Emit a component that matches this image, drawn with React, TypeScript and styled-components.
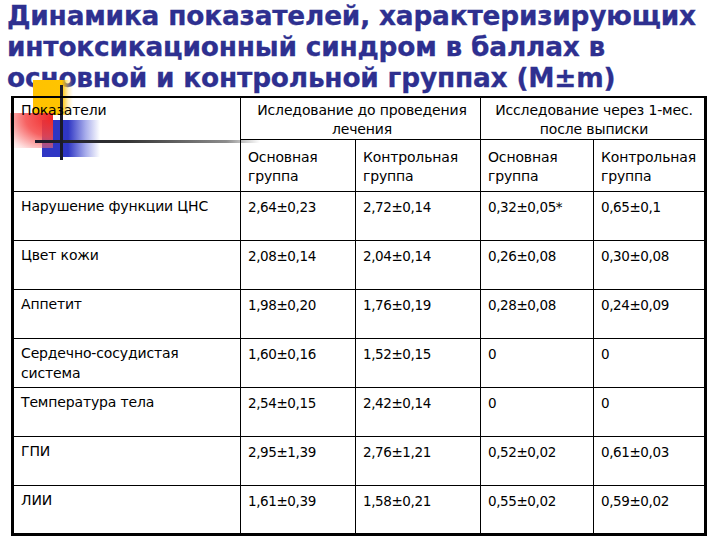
import { createGlobalStyle, styled } from 'styled-components';

const GlobalStyle = createGlobalStyle`
  html, body {
    margin: 0;
    padding: 0;
    background: #ffffff;
  }
  body {
    width: 720px;
    height: 540px;
    overflow: hidden;
    font-family: 'DejaVu Sans', Tahoma, sans-serif;
  }
`;

type Row = {
  label: string;
  values: string[];
};

const rows: Row[] = [
  { label: 'Нарушение функции ЦНС', values: ['2,64±0,23', '2,72±0,14', '0,32±0,05*', '0,65±0,1'] },
  { label: 'Цвет кожи', values: ['2,08±0,14', '2,04±0,14', '0,26±0,08', '0,30±0,08'] },
  { label: 'Аппетит', values: ['1,98±0,20', '1,76±0,19', '0,28±0,08', '0,24±0,09'] },
  { label: 'Сердечно-сосудистая система', values: ['1,60±0,16', '1,52±0,15', '0', '0'] },
  { label: 'Температура тела', values: ['2,54±0,15', '2,42±0,14', '0', '0'] },
  { label: 'ГПИ', values: ['2,95±1,39', '2,76±1,21', '0,52±0,02', '0,61±0,03'] },
  { label: 'ЛИИ', values: ['1,61±0,39', '1,58±0,21', '0,55±0,02', '0,59±0,02'] },
];

const App = () => {
  return (
    <>
      <GlobalStyle />
      <Slide>
        <Title>
          Динамика показателей, характеризирующих интоксикационный синдром в баллах в основной и
          контрольной группах (M±m)
        </Title>
        <TableWrap>
          <Decor aria-hidden>
            <Yellow />
            <Blue />
            <Red />
            <HLine />
            <VLine />
          </Decor>
          <Table>
            <colgroup>
              <col style={{ width: 228 }} />
              <col style={{ width: 115 }} />
              <col style={{ width: 125 }} />
              <col style={{ width: 113 }} />
              <col style={{ width: 112 }} />
            </colgroup>
            <tbody>
              <HeadRow $h={41}>
                <HeadCell rowSpan={2}>Показатели</HeadCell>
                <HeadCell colSpan={2} $center>
                  Иследование до проведения лечения
                </HeadCell>
                <HeadCell colSpan={2} $center>
                  Исследование через 1-мес. после выписки
                </HeadCell>
              </HeadRow>
              <HeadRow $h={52}>
                <GroupCell>Основная группа</GroupCell>
                <GroupCell>Контрольная группа</GroupCell>
                <GroupCell>Основная группа</GroupCell>
                <GroupCell>Контрольная группа</GroupCell>
              </HeadRow>
              {rows.map((r) => (
                <DataRow key={r.label}>
                  <Cell>{r.label}</Cell>
                  {r.values.map((v, i) => (
                    <Value key={i}>{v}</Value>
                  ))}
                </DataRow>
              ))}
            </tbody>
          </Table>
        </TableWrap>
      </Slide>
    </>
  );
};

export default App;

const Slide = styled.div`
  width: 720px;
  height: 540px;
  display: flex;
  flex-direction: column;
`;

const Title = styled.h1`
  margin: 0;
  padding: 0 0 0 7px;
  width: 716px;
  height: 96px;
  font-family: 'DejaVu Sans', Tahoma, sans-serif;
  font-weight: bold;
  font-size: 26.4px;
  line-height: 31px;
  letter-spacing: -0.2px;
  color: #2e3090;
  box-sizing: border-box;
  -webkit-text-stroke: 0.3px #2e3090;
`;

const TableWrap = styled.div`
  position: relative;
  margin-left: 11px;
  width: 696px;
`;

const Table = styled.table`
  position: relative;
  z-index: 1;
  border-collapse: collapse;
  table-layout: fixed;
  width: 694px;
  background: transparent;
  border-top: 2px solid #000;
  border-left: 3px solid #000;
  border-right: 3px solid #000;
  border-bottom: 3px solid #000;
`;

const HeadRow = styled.tr<{ $h: number }>`
  height: ${(p) => p.$h}px;
`;

const DataRow = styled.tr`
  height: 49px;
`;

const Cell = styled.td<{ $center?: boolean }>`
  border: 1px solid #000;
  vertical-align: top;
  padding: 4px 4px 0 7px;
  font-family: 'DejaVu Sans', Tahoma, sans-serif;
  font-size: 14px;
  line-height: 20px;
  letter-spacing: -0.15px;
  color: #000;
  text-align: ${(p) => (p.$center ? 'center' : 'left')};
  overflow: hidden;
`;

const HeadCell = styled(Cell)`
  padding-top: 3px;
  line-height: 19px;
`;

const GroupCell = styled(Cell)`
  padding-top: 8px;
  line-height: 19px;
`;

const Value = styled(Cell)`
  padding-top: 5px;
  font-size: 13.5px;
  letter-spacing: -0.4px;
`;

const Decor = styled.div`
  position: absolute;
  left: -11px;
  top: -16px;
  width: 260px;
  height: 90px;
  pointer-events: none;
  z-index: 0;
`;

const Yellow = styled.div`
  position: absolute;
  left: 33px;
  top: 0;
  width: 40px;
  height: 35px;
  background: linear-gradient(90deg, #ffc200 0%, #ffc400 72%, rgba(255, 215, 100, 0.4) 88%, rgba(255, 235, 170, 0) 100%);
`;

const Red = styled.div`
  position: absolute;
  left: 10px;
  top: 33px;
  width: 43px;
  height: 35px;
  background: radial-gradient(ellipse at 100% 15%, #f02828 0%, rgba(245, 70, 70, 0.85) 45%, rgba(255, 170, 170, 0.35) 85%, rgba(255, 220, 220, 0.1) 100%);
`;

const Blue = styled.div`
  position: absolute;
  left: 42px;
  top: 40px;
  width: 58px;
  height: 37px;
  background: linear-gradient(90deg, #2f36c4 0%, #2f36c4 45%, rgba(80, 90, 215, 0.5) 75%, rgba(120, 130, 230, 0) 100%);
`;

const VLine = styled.div`
  position: absolute;
  left: 60px;
  top: 5px;
  width: 3px;
  height: 75px;
  background: #1a1a2a;
`;

const HLine = styled.div`
  position: absolute;
  left: 35px;
  top: 60px;
  width: 225px;
  height: 3px;
  background: linear-gradient(90deg, #1a1a2a 0%, #333 40%, rgba(120, 120, 120, 0.85) 85%, rgba(170, 170, 170, 0) 100%);
`;
